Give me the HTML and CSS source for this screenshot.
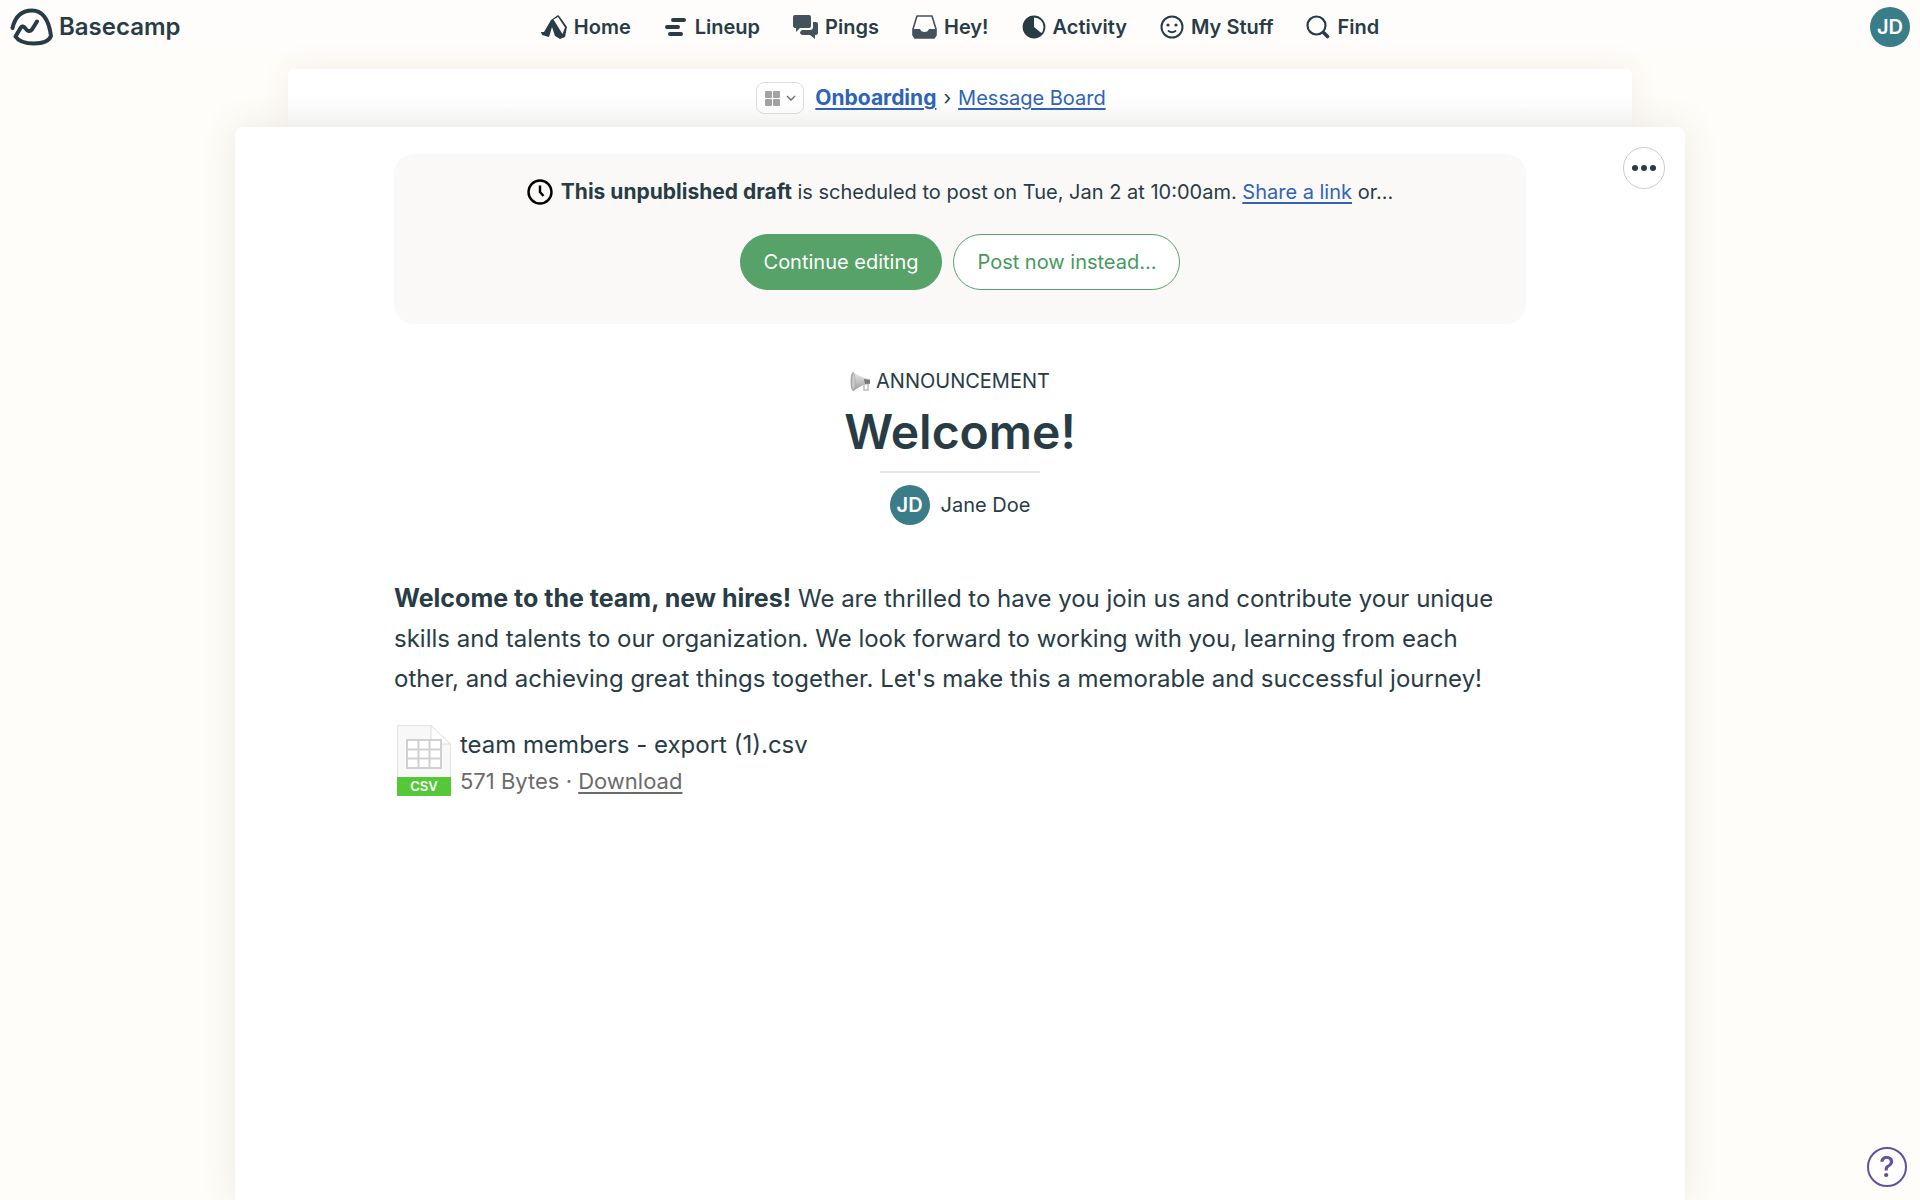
FILE: index.html
```html
<!DOCTYPE html>
<html lang="en">
<head>
  <meta charset="UTF-8">
  <meta name="viewport" content="width=device-width, initial-scale=1.0">
  <title>Welcome!</title>
  <link rel="stylesheet" href="styles.css">
</head>
<body>

  <header class="topbar">
    <a class="brand" href="#">
      <svg width="43" height="38" viewBox="0 0 43 38" fill="none" stroke="currentColor" stroke-width="4" stroke-linecap="round" stroke-linejoin="round">
        <path d="M2.500 20C5 9 11 2.500 22 2.500C34 2.500 39 13 41 28C39 33 32 35.500 24 35.500C15 35.500 8 32.500 5.500 28.500L10.500 20C12 17.500 14 18.500 15.500 20.500C17.500 23.500 20 24 22 21.500L27 13.500"/>
      </svg>
      <span>Basecamp</span>
    </a>

    <nav class="nav">
      <a href="#">
        <svg width="26" height="24" viewBox="0 0 26 24">
          <path fill="currentColor" d="M10 5L17 0L19 2L26 12L24 22L19 24L14 21L11 12L8 22L1 20L0 17L3 17Z"/>
          <path fill="#fffefd" d="M12.500 4.500L17 2L24 12.500L21.500 19Z"/>
        </svg>
        Home</a>
      <a href="#">
        <svg width="24" height="24" viewBox="0 0 24 24" stroke="currentColor" stroke-width="4" stroke-linecap="round">
          <path d="M9 5H20M3 12H14M6 19H17"/>
        </svg>
        Lineup</a>
      <a href="#">
        <svg class="icon-dim" width="25" height="24" viewBox="0 0 25 24" fill="currentColor">
          <path d="M2 0H16Q18 0 18 2V11Q18 13 16 13H7L3 17V13H2Q0 13 0 11V2Q0 0 2 0Z"/>
          <path d="M20 7H23Q25 7 25 9V18Q25 20 23 20H22V24L17 20H10Q7 20 7 17L9 15H17Q20 15 20 12Z"/>
        </svg>
        Pings</a>
      <a href="#">
        <svg class="icon-dim" width="25" height="24" viewBox="0 0 25 24">
          <path fill="none" stroke="currentColor" stroke-width="1.600" stroke-linejoin="round" d="M5 1H20L24 14V20L22 23H3L1 20V14Z"/>
          <path fill="currentColor" d="M1 14H8Q9 17 12.500 17Q16 17 17 14H24V20L22 23H3L1 20Z"/>
        </svg>
        Hey!</a>
      <a href="#">
        <svg width="24" height="24" viewBox="0 0 24 24">
          <circle cx="12" cy="12" r="10.500" fill="none" stroke="currentColor" stroke-width="1.800"/>
          <path fill="currentColor" d="M12 1A11 11 0 1 0 20.500 19L12 12Z"/>
        </svg>
        Activity</a>
      <a href="#">
        <svg width="24" height="24" viewBox="0 0 24 24">
          <circle cx="12" cy="12" r="10.500" fill="none" stroke="currentColor" stroke-width="2"/>
          <circle cx="8" cy="10" r="1.600" fill="currentColor"/>
          <circle cx="16" cy="10" r="1.600" fill="currentColor"/>
          <path fill="none" stroke="currentColor" stroke-width="1.800" stroke-linecap="round" d="M8.500 16Q12 18.500 15.500 16"/>
        </svg>
        My Stuff</a>
      <a href="#">
        <svg width="24" height="24" viewBox="0 0 24 24" fill="none" stroke="currentColor" stroke-linecap="round">
          <circle cx="10.500" cy="10.500" r="9" stroke-width="2.200"/>
          <path stroke-width="3.600" d="M18 18L21.500 21.500"/>
        </svg>
        Find</a>
    </nav>

    <a class="avatar" href="#">JD</a>
  </header>

  <div class="breadcrumb">
    <button type="button" class="tools" aria-label="Project tools">
      <svg width="15" height="15" viewBox="0 0 15 15" fill="#a3a3a3">
        <rect width="7" height="7" rx="1"/><rect x="8" width="7" height="7" rx="1"/>
        <rect y="8" width="7" height="7" rx="1"/><rect x="8" y="8" width="7" height="7" rx="1"/>
      </svg>
      <svg width="10" height="6" viewBox="0 0 10 6" fill="none" stroke="#6b7075" stroke-width="1.400">
        <path d="M1 1L5 5L9 1"/>
      </svg>
    </button>
    <a href="#"><b>Onboarding</b></a>
    <span>›</span>
    <a href="#">Message Board</a>
  </div>

  <main class="sheet">
    <button type="button" class="more" aria-label="More options">
      <svg width="24" height="6" viewBox="0 0 24 6" fill="currentColor">
        <circle cx="3" cy="3" r="3"/><circle cx="12" cy="3" r="3"/><circle cx="21" cy="3" r="3"/>
      </svg>
    </button>

    <section class="draft">
      <p>
        <svg width="26" height="26" viewBox="0 0 26 26" fill="none" stroke="#000" stroke-width="2.400">
          <circle cx="13" cy="13" r="11.500"/>
          <path d="M13 6.500V13L16.500 17"/>
        </svg>
        <span><b>This unpublished draft</b> is scheduled to post on Tue, Jan 2 at 10:00am. <a href="#">Share a link</a> or…</span>
      </p>
      <div class="actions">
        <button type="button" class="btn btn-primary">Continue editing</button>
        <button type="button" class="btn">Post now instead…</button>
      </div>
    </section>

    <article>
      <div class="category">
        <svg width="21" height="21" viewBox="0 0 21 21">
          <defs>
            <linearGradient id="horn" x1="0" y1="0" x2="0" y2="1">
              <stop offset="0" stop-color="#eee"/>
              <stop offset="1" stop-color="#999"/>
            </linearGradient>
          </defs>
          <path d="M14 12V19H18V11" fill="none" stroke="#bbb" stroke-width="1.500"/>
          <path d="M2 1L14 7L20 8V13L13 14L3 20Z" fill="url(#horn)"/>
          <ellipse cx="3" cy="10.500" rx="2.500" ry="9.500" fill="#aaa"/>
          <ellipse cx="3.500" cy="10.500" rx="1.300" ry="7.500" fill="#ccc"/>
          <path d="M14 8L20 9V12.500L15 13Z" fill="#777"/>
        </svg>
        Announcement
      </div>
      <h1>Welcome!</h1>
      <hr>
      <div class="author">
        <span class="avatar">JD</span>
        Jane Doe
      </div>

      <p class="body-text"><b>Welcome to the team, new hires!</b> We are thrilled to have you join us and contribute your unique skills and talents to our organization. We look forward to working with you, learning from each other, and achieving great things together. Let's make this a memorable and successful journey!</p>

      <div class="file">
        <svg width="54" height="71" viewBox="0 0 54 71">
          <path d="M0.500 0.500H34L53.500 19V70.500H0.500Z" fill="#f8f8f8" stroke="#e2e2e2"/>
          <path d="M34 0.500V19H53.500Z" fill="#fff" stroke="#ddd"/>
          <rect x="10" y="15" width="34" height="28" fill="#fff" stroke="#d0d0d0" stroke-width="2"/>
          <path d="M10 24.500H44M10 33.500H44M21.500 15V43M32.500 15V43" stroke="#d0d0d0" stroke-width="2"/>
          <rect y="52" width="54" height="19" fill="#55c838"/>
          <text x="27" y="66" class="file-type">CSV</text>
        </svg>
        <div>
          <div class="file-name">team members - export (1).csv</div>
          <div class="file-meta">571 Bytes · <a href="#">Download</a></div>
        </div>
      </div>
    </article>
  </main>

  <button type="button" class="help" aria-label="Help">?</button>

</body>
</html>
```

FILE: styles.css
```css
* {
  box-sizing: border-box;
}

body {
  margin: 0;
  min-height: 100vh;
  display: flex;
  flex-direction: column;
  font-family: Inter, "Liberation Sans", sans-serif;
  font-size: 20px;
  line-height: 32px;
  color: #283c46;
  background: #fffdf9;
}

a {
  color: #2f64b9;
  text-decoration-thickness: 2px;
  text-underline-offset: 3px;
}

b {
  font-size: 21px;
}

button {
  font: inherit;
  cursor: pointer;
}

svg {
  flex: none;
}

.topbar {
  display: grid;
  grid-template-columns: 1fr auto 1fr;
  align-items: center;
  height: 54px;
  padding: 0 10px;
  background: #fffdfc;
}

.topbar a {
  color: #283c46;
  text-decoration: none;
}

.brand {
  display: flex;
  align-items: center;
  gap: 6px;
  font-size: 24px;
  font-weight: 600;
}

.nav {
  display: flex;
  gap: 33px;
  font-weight: 600;
}

.nav a {
  display: flex;
  align-items: center;
  gap: 7px;
}

.icon-dim {
  color: #43525b;
}

.avatar {
  display: flex;
  align-items: center;
  justify-content: center;
  width: 40px;
  height: 40px;
  border-radius: 50%;
  background: #3a7d88;
  font-weight: 600;
  color: #fff;
}

.topbar .avatar {
  justify-self: end;
  color: #fff;
}

.breadcrumb {
  display: flex;
  align-items: center;
  justify-content: center;
  gap: 7px;
  width: 70%;
  height: 58px;
  margin: 15px auto 0;
  padding-right: 58px;
  border-radius: 6px 6px 0 0;
  background: linear-gradient(#fff 60%, #fafafa);
  box-shadow: 0 0 32px rgba(90, 60, 30, 0.08);
}

.tools {
  display: flex;
  align-items: center;
  justify-content: center;
  gap: 6px;
  width: 48px;
  height: 32px;
  margin-right: 4px;
  padding: 0;
  border: 1px solid #dedede;
  border-radius: 8px;
  background: #fff;
}

.sheet {
  position: relative;
  flex: 1;
  width: 1450px;
  max-width: 94%;
  margin: 0 auto;
  padding: 27px 159px 0;
  border-radius: 8px 8px 0 0;
  background: #fff;
  box-shadow: 0 0 36px rgba(90, 80, 50, 0.12);
}

.more {
  position: absolute;
  top: 20px;
  right: 20px;
  display: flex;
  align-items: center;
  justify-content: center;
  width: 42px;
  height: 42px;
  padding: 0;
  border: 1px solid #ccc;
  border-radius: 50%;
  background: #fff;
  color: #283c46;
}

.draft {
  height: 170px;
  padding-top: 22px;
  border-radius: 20px;
  background: #faf9f7;
}

.draft p {
  display: flex;
  align-items: center;
  justify-content: center;
  gap: 8px;
  margin: 0;
}

.actions {
  display: flex;
  justify-content: center;
  gap: 11px;
  margin-top: 26px;
}

.btn {
  height: 56px;
  padding: 0 23px;
  border: 1px solid #56a269;
  border-radius: 28px;
  background: #fff;
  color: #469a5b;
}

.btn-primary {
  background: #56a269;
  color: #fff;
}

.category {
  display: flex;
  align-items: center;
  justify-content: center;
  gap: 5px;
  margin-top: 41px;
  padding-right: 20px;
  text-transform: uppercase;
}

h1 {
  margin: 3px 0 7px;
  font-size: 48px;
  font-weight: 600;
  line-height: 64px;
  text-align: center;
}

hr {
  width: 160px;
  height: 2px;
  margin: 0 auto 12px;
  border: 0;
  background: #e5e5e5;
}

.author {
  display: flex;
  align-items: center;
  justify-content: center;
  gap: 11px;
}

.body-text {
  margin: 53px 0 26px;
  font-size: 24px;
  line-height: 40px;
}

.body-text b {
  font-size: 25px;
}

.file {
  display: flex;
  gap: 9px;
  padding-left: 3px;
}

.file-name {
  font-size: 24px;
  line-height: 40px;
}

.file-meta {
  font-size: 22px;
  color: #6b6b6b;
}

.file-meta a {
  color: inherit;
}

.file-type {
  fill: #fff;
  font-size: 13px;
  font-weight: 600;
  text-anchor: middle;
}

.help {
  position: fixed;
  right: 13px;
  bottom: 13px;
  width: 40px;
  height: 40px;
  padding: 0;
  border: 2px solid #6350a2;
  border-radius: 50%;
  background: #fff;
  font-size: 29px;
  font-weight: 500;
  color: #6350a2;
}
```
